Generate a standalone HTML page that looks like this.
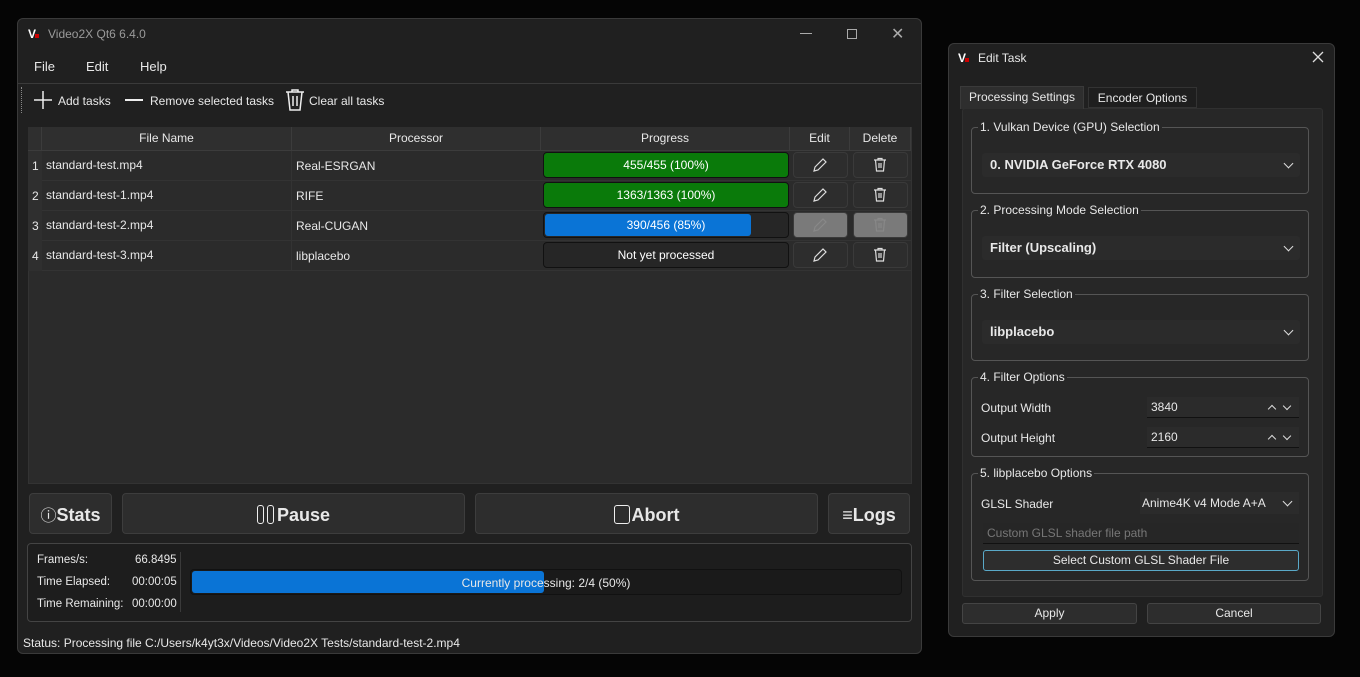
<!DOCTYPE html>
<html><head><meta charset="utf-8"><style>
*{box-sizing:border-box;margin:0;padding:0}
body{width:1360px;height:677px;background:#050505;font-family:"Liberation Sans",sans-serif;font-size:12px;color:#e8e8e8;position:relative;overflow:hidden}
.a{position:absolute}
.win{left:17px;top:18px;width:905px;height:636px;background:#202020;border:1px solid #3a3a3a;border-radius:6px}
.t{white-space:nowrap}
.tbl{left:28px;top:127px;width:884px;height:357px;background:#2b2b2b;border:1px solid #333}
.hd{background:#2f2f2f;border-right:1px solid #3c3c3c;border-bottom:1px solid #3c3c3c;text-align:center;line-height:23px;height:24px}
.cell{line-height:29px;height:30px;border-bottom:1px solid #333;padding-left:4px}
.pb{height:26px;border:1px solid #111;border-radius:4px;background:#262626;text-align:center;line-height:24px;font-size:12px;color:#fff}
.ib{height:26px;width:55px;background:#2d2d2d;border:1px solid #3a3a3a;border-radius:4px}
.bb{top:493px;height:41px;background:#2d2d2d;border:1px solid #3d3d3d;border-radius:4px;font-weight:bold;font-size:18px;text-align:center;line-height:42px}
.dlg{left:948px;top:43px;width:387px;height:594px;background:#202020;border:1px solid #3a3a3a;border-radius:6px}
.gb{left:971px;width:338px;border:1px solid #555;border-radius:4px}
.gl{background:#272727;padding:0 2px;top:-9px;left:6px;line-height:16px}
.cb{background:#2b2b2b;border-radius:3px;height:24px;font-weight:bold;font-size:13px;line-height:24px;padding-left:8px}
.chev{position:absolute;right:8px;top:7px;width:7px;height:7px;border-right:1.5px solid #ddd;border-bottom:1.5px solid #ddd;transform:rotate(45deg)}
.up{position:absolute;top:9px;width:6px;height:6px;border-left:1.3px solid #ddd;border-top:1.3px solid #ddd;transform:rotate(45deg)}
.dn{position:absolute;top:6px;width:6px;height:6px;border-right:1.3px solid #ddd;border-bottom:1.3px solid #ddd;transform:rotate(45deg)}
.btn2{background:#2d2d2d;border:1px solid #444;border-radius:3px;text-align:center;line-height:19px;height:21px}
.logo{font-weight:bold;font-size:12px;color:#fff;letter-spacing:-1px}
.logo i{display:inline-block;width:4px;height:4px;background:#c00;font-style:normal}
</style></head><body>
<div class="a win"></div>
<div class="a t logo" style="left:28px;top:27px">V<i></i></div>
<div class="a t" style="left:48px;top:27px;color:#9a9a9a">Video2X Qt6 6.4.0</div>
<div class="a" style="left:800px;top:33px;width:12px;height:1px;background:#aaa"></div>
<div class="a" style="left:847px;top:29px;width:10px;height:10px;border:1px solid #aaa"></div>
<div class="a t" style="left:891px;top:24px;color:#aaa;font-size:16px">✕</div>
<div class="a t" style="left:34px;top:59px;font-size:13px">File</div>
<div class="a t" style="left:86px;top:59px;font-size:13px">Edit</div>
<div class="a t" style="left:140px;top:59px;font-size:13px">Help</div>
<div class="a" style="left:18px;top:83px;width:903px;height:1px;background:#3a3a3a"></div>
<div class="a" style="left:21px;top:87px;width:1px;height:26px;border-left:1px dotted #888"></div>
<svg class="a" style="left:33px;top:90px" width="20" height="20" viewBox="0 0 20 20" stroke="#eee" stroke-width="1.5"><path d="M10 1v18M1 10h18"/></svg>
<div class="a t" style="left:58px;top:94px">Add tasks</div>
<div class="a" style="left:125px;top:99px;width:18px;height:2px;background:#eee"></div>
<div class="a t" style="left:150px;top:94px">Remove selected tasks</div>
<svg class="a" style="left:284px;top:88px" width="22" height="24" viewBox="0 0 22 24" fill="none" stroke="#eee" stroke-width="1.5"><path d="M2 4h18M8 4V2h6v2M4 4l2 18h10l2-18M9 8v10M13 8v10"/></svg>
<div class="a t" style="left:309px;top:94px">Clear all tasks</div>

<div class="a tbl"></div>
<div class="a hd" style="left:28px;top:127px;width:14px"></div>
<div class="a hd" style="left:42px;top:127px;width:250px">File Name</div>
<div class="a hd" style="left:292px;top:127px;width:249px">Processor</div>
<div class="a hd" style="left:541px;top:127px;width:249px">Progress</div>
<div class="a hd" style="left:790px;top:127px;width:60px">Edit</div>
<div class="a hd" style="left:850px;top:127px;width:61px">Delete</div>
<div class="a" style="left:28px;top:151px;width:14px;height:120px;background:#2f2f2f"></div>
<div class="a t" style="left:32px;top:159px">1</div><div class="a t" style="left:32px;top:189px">2</div><div class="a t" style="left:32px;top:219px">3</div><div class="a t" style="left:32px;top:249px">4</div>
<div class="a" style="left:42px;top:151px;width:869px">
<div class="cell">standard-test.mp4</div><div class="cell">standard-test-1.mp4</div><div class="cell">standard-test-2.mp4</div><div class="cell">standard-test-3.mp4</div></div>
<div class="a t" style="left:296px;top:159px">Real-ESRGAN</div>
<div class="a t" style="left:296px;top:189px">RIFE</div>
<div class="a t" style="left:296px;top:219px">Real-CUGAN</div>
<div class="a t" style="left:296px;top:249px">libplacebo</div>
<div class="a" style="left:291px;top:151px;width:1px;height:120px;background:#333"></div>
<div class="a pb" style="left:543px;top:152px;width:246px;background:#0a7a0a">455/455 (100%)</div>
<div class="a pb" style="left:543px;top:182px;width:246px;background:#0a7a0a">1363/1363 (100%)</div>
<div class="a pb" style="left:543px;top:212px;width:246px"><div class="a" style="left:1px;top:1px;width:206px;height:22px;background:#0a74d6;border-radius:3px"></div><span style="position:relative">390/456 (85%)</span></div>
<div class="a pb" style="left:543px;top:242px;width:246px">Not yet processed</div>
<div class="a ib" style="left:793px;top:152px"></div><div class="a ib" style="left:853px;top:152px"></div>
<div class="a ib" style="left:793px;top:182px"></div><div class="a ib" style="left:853px;top:182px"></div>
<div class="a ib" style="left:793px;top:212px;background:#7a7a7a"></div><div class="a ib" style="left:853px;top:212px;background:#7a7a7a"></div>
<div class="a ib" style="left:793px;top:242px"></div><div class="a ib" style="left:853px;top:242px"></div>
<svg class="a" style="left:812px;top:157px" width="16" height="16" viewBox="0 0 16 16" fill="none" stroke="#ddd" stroke-width="1.2"><path d="M2 14l1-4 8-8 3 3-8 8z"/></svg>
<svg class="a" style="left:812px;top:187px" width="16" height="16" viewBox="0 0 16 16" fill="none" stroke="#ddd" stroke-width="1.2"><path d="M2 14l1-4 8-8 3 3-8 8z"/></svg>
<svg class="a" style="left:812px;top:217px" width="16" height="16" viewBox="0 0 16 16" fill="none" stroke="#888" stroke-width="1.2"><path d="M2 14l1-4 8-8 3 3-8 8z"/></svg>
<svg class="a" style="left:812px;top:247px" width="16" height="16" viewBox="0 0 16 16" fill="none" stroke="#ddd" stroke-width="1.2"><path d="M2 14l1-4 8-8 3 3-8 8z"/></svg>
<svg class="a" style="left:872px;top:157px" width="16" height="16" viewBox="0 0 16 16" fill="none" stroke="#ddd" stroke-width="1.2"><path d="M2 3h12M6 3V1.5h4V3M3.5 3l1 11h7l1-11M7 6v5M9 6v5"/></svg>
<svg class="a" style="left:872px;top:187px" width="16" height="16" viewBox="0 0 16 16" fill="none" stroke="#ddd" stroke-width="1.2"><path d="M2 3h12M6 3V1.5h4V3M3.5 3l1 11h7l1-11M7 6v5M9 6v5"/></svg>
<svg class="a" style="left:872px;top:217px" width="16" height="16" viewBox="0 0 16 16" fill="none" stroke="#888" stroke-width="1.2"><path d="M2 3h12M6 3V1.5h4V3M3.5 3l1 11h7l1-11M7 6v5M9 6v5"/></svg>
<svg class="a" style="left:872px;top:247px" width="16" height="16" viewBox="0 0 16 16" fill="none" stroke="#ddd" stroke-width="1.2"><path d="M2 3h12M6 3V1.5h4V3M3.5 3l1 11h7l1-11M7 6v5M9 6v5"/></svg>

<div class="a bb" style="left:29px;width:83px"><span style="font-weight:normal;font-size:16px">ⓘ</span>Stats</div>
<div class="a bb" style="left:122px;width:343px"><span style="display:inline-block;width:7px;height:19px;border:1.5px solid #eee;border-radius:3px;vertical-align:-3px"></span><span style="display:inline-block;width:7px;height:19px;border:1.5px solid #eee;border-radius:3px;vertical-align:-3px;margin:0 3px 0 3px"></span>Pause</div>
<div class="a bb" style="left:475px;width:343px"><span style="display:inline-block;width:16px;height:19px;border:1.5px solid #eee;border-radius:3px;vertical-align:-3px;margin-right:2px"></span>Abort</div>
<div class="a bb" style="left:828px;width:82px"><span style="font-weight:normal">≡</span>Logs</div>

<div class="a" style="left:27px;top:543px;width:885px;height:79px;border:1px solid #444;border-radius:4px;background:#1d1d1d"></div>
<div class="a t" style="left:37px;top:554px;font-size:11.5px">Frames/s:</div><div class="a t" style="left:135px;top:554px;font-size:11.5px">66.8495</div>
<div class="a t" style="left:37px;top:576px;font-size:11.5px">Time Elapsed:</div><div class="a t" style="left:132px;top:576px;font-size:11.5px">00:00:05</div>
<div class="a t" style="left:37px;top:598px;font-size:11.5px">Time Remaining:</div><div class="a t" style="left:132px;top:598px;font-size:11.5px">00:00:00</div>
<div class="a" style="left:180px;top:552px;width:1px;height:60px;background:#3a3a3a"></div>
<div class="a" style="left:190px;top:569px;width:712px;height:26px;background:#1a1a1a;border:1px solid #111;border-radius:4px"></div>
<div class="a" style="left:192px;top:571px;width:352px;height:22px;background:#0a74d6;border-radius:3px"></div>
<div class="a t" style="left:190px;top:576px;width:712px;text-align:center">Currently processing: 2/4 (50%)</div>
<div class="a t" style="left:23px;top:636px">Status: Processing file C:/Users/k4yt3x/Videos/Video2X Tests/standard-test-2.mp4</div>

<div class="a dlg"></div>
<div class="a t logo" style="left:958px;top:51px">V<i></i></div>
<svg class="a" style="left:1312px;top:51px" width="12" height="12" viewBox="0 0 12 12" stroke="#ddd" stroke-width="1.3"><path d="M1 1l10 10M11 1L1 11"/></svg>
<div class="a t" style="left:978px;top:51px">Edit Task</div>
<div class="a" style="left:962px;top:108px;width:361px;height:489px;background:#272727;border:1px solid #303030;border-radius:3px"></div>
<div class="a" style="left:960px;top:86px;width:124px;height:23px;background:#2e2e2e;border:1px solid #3a3a3a;border-bottom:none;text-align:center;line-height:21px">Processing Settings</div>
<div class="a" style="left:1088px;top:87px;width:109px;height:21px;background:#1e1e1e;border:1px solid #333;text-align:center;line-height:21px">Encoder Options</div>

<div class="a gb" style="top:127px;height:67px"><div class="a t gl">1. Vulkan Device (GPU) Selection</div>
<div class="a cb" style="left:10px;top:25px;width:318px">0. NVIDIA GeForce RTX 4080<div class="chev"></div></div></div>
<div class="a gb" style="top:210px;height:68px"><div class="a t gl">2. Processing Mode Selection</div>
<div class="a cb" style="left:10px;top:25px;width:318px">Filter (Upscaling)<div class="chev"></div></div></div>
<div class="a gb" style="top:294px;height:67px"><div class="a t gl">3. Filter Selection</div>
<div class="a cb" style="left:10px;top:25px;width:318px">libplacebo<div class="chev"></div></div></div>
<div class="a gb" style="top:377px;height:80px"><div class="a t gl">4. Filter Options</div>
<div class="a t" style="left:9px;top:23px">Output Width</div>
<div class="a" style="left:175px;top:19px;width:152px;height:21px;background:#2b2b2b;border-bottom:1px solid #111;padding-left:4px;line-height:21px">3840<span class="up" style="right:24px"></span><span class="dn" style="right:9px"></span></div>
<div class="a t" style="left:9px;top:53px">Output Height</div>
<div class="a" style="left:175px;top:49px;width:152px;height:21px;background:#2b2b2b;border-bottom:1px solid #111;padding-left:4px;line-height:21px">2160<span class="up" style="right:24px"></span><span class="dn" style="right:9px"></span></div></div>
<div class="a gb" style="top:473px;height:108px"><div class="a t gl">5. libplacebo Options</div>
<div class="a t" style="left:9px;top:23px">GLSL Shader</div>
<div class="a" style="left:168px;top:18px;width:159px;height:22px;background:#2b2b2b;line-height:22px;padding-left:2px">Anime4K v4 Mode A+A<div class="chev" style="top:6px"></div></div>
<div class="a" style="left:11px;top:49px;width:316px;height:21px;background:#262626;border-bottom:1px solid #111;color:#777;padding-left:4px;line-height:20px">Custom GLSL shader file path</div>
<div class="a" style="left:11px;top:76px;width:316px;height:21px;background:#2d2d2d;border:1px solid #5aa9c8;border-radius:3px;text-align:center;line-height:19px">Select Custom GLSL Shader File</div></div>
<div class="a btn2" style="left:962px;top:603px;width:175px">Apply</div>
<div class="a btn2" style="left:1147px;top:603px;width:174px">Cancel</div>
</body></html>
